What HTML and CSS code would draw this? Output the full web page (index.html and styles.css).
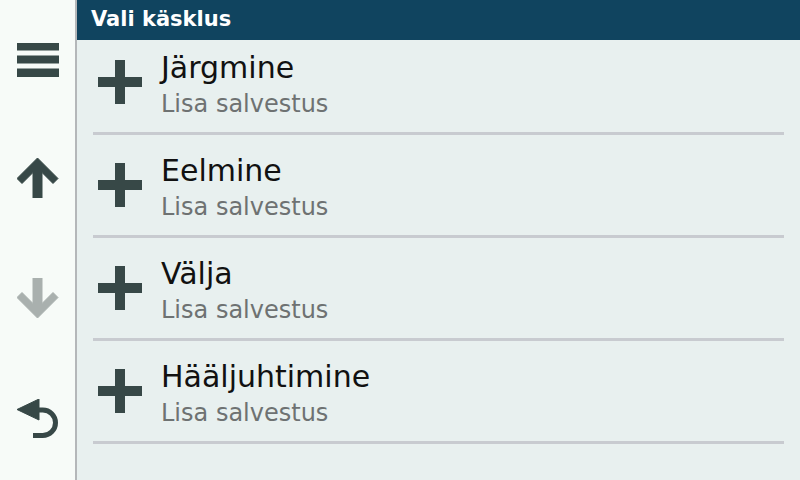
FILE: index.html
```html
<!DOCTYPE html>
<html lang="et">
  <head>
    <meta charset="UTF-8" />
    <meta name="viewport" content="width=device-width, initial-scale=1.0" />
    <title>Vali käsklus</title>
    <link rel="stylesheet" href="styles.css">
  </head>
  <body>
    <aside class="sidebar">
      <button class="side-btn" aria-label="Menüü">
        <svg width="42" height="34" viewBox="0 0 42 34">
          <rect x="0" y="0" width="42" height="7" />
          <rect x="0" y="13" width="42" height="7" />
          <rect x="0" y="26" width="42" height="8" />
        </svg>
      </button>
      <button class="side-btn" aria-label="Üles">
        <svg width="42" height="40" viewBox="0 0 42 40">
          <polygon points="20.5,0 41,20.5 36,25.5 25,14.5 25,40 16,40 16,14.5 5,25.5 0,20.5" />
        </svg>
      </button>
      <button class="side-btn disabled" aria-label="Alla">
        <svg width="42" height="40" viewBox="0 0 42 40">
          <polygon points="20.5,40 41,19.5 36,14.5 25,25.5 25,0 16,0 16,25.5 5,14.5 0,19.5" />
        </svg>
      </button>
      <button class="side-btn" aria-label="Tagasi">
        <svg width="42" height="40" viewBox="0 0 42 40">
          <polygon points="0,10.5 22,0 22,21" />
          <path d="M19 11 H25.75 A12.75 12.75 0 0 1 25.75 36.5 H16" fill="none" stroke-width="5" />
        </svg>
      </button>
    </aside>

    <main class="panel">
      <header class="title-bar">Vali käsklus</header>
      <ul class="list">
        <li class="item">
          <i class="plus"></i>
          <div class="label">
            <h3>Järgmine</h3>
            <p>Lisa salvestus</p>
          </div>
        </li>
        <li class="item">
          <i class="plus"></i>
          <div class="label">
            <h3>Eelmine</h3>
            <p>Lisa salvestus</p>
          </div>
        </li>
        <li class="item">
          <i class="plus"></i>
          <div class="label">
            <h3>Välja</h3>
            <p>Lisa salvestus</p>
          </div>
        </li>
        <li class="item">
          <i class="plus"></i>
          <div class="label">
            <h3>Hääljuhtimine</h3>
            <p>Lisa salvestus</p>
          </div>
        </li>
      </ul>
    </main>
  </body>
</html>
```

FILE: styles.css
```css
body {
  margin: 0;
  width: 800px;
  height: 480px;
  overflow: hidden;
  display: flex;
  font-family: "DejaVu Sans", "Noto Sans", sans-serif;
  background: #e8f0ef;
}
.sidebar {
  width: 77px;
  flex-shrink: 0;
  background: #f7fbf8;
  border-right: 2px solid #b4b7b9;
  display: flex;
  flex-direction: column;
  justify-content: space-between;
  padding: 43px 0 41px 17px;
  box-sizing: border-box;
}
.side-btn {
  background: none;
  border: 0;
  padding: 0;
  width: 42px;
  display: flex;
  fill: #374847;
  stroke: #374847;
  svg {
    display: block;
  }
  &.disabled {
    fill: #a9b0ae;
    stroke: #a9b0ae;
  }
}
.panel {
  flex-grow: 1;
  display: flex;
  flex-direction: column;
  overflow: hidden;
}
.title-bar {
  position: relative;
  z-index: 1;
  height: 40px;
  flex-shrink: 0;
  background: #10445f;
  color: #fff;
  font-weight: bold;
  font-size: 21px;
  line-height: 38px;
  padding-left: 14px;
}
.list {
  list-style: none;
  margin: -8px 0 0;
  padding: 0 16px;
}
.item {
  height: 100px;
  border-bottom: 3px solid #c8cbd0;
  display: flex;
  align-items: center;
  gap: 19px;
  padding-left: 5px;
}
.plus {
  width: 44px;
  height: 44px;
  flex-shrink: 0;
  background:
    linear-gradient(#374847, #374847) center / 10px 44px no-repeat,
    linear-gradient(#374847, #374847) center / 44px 10px no-repeat;
}
.label {
  padding-top: 6px;
  h3 {
    margin: 0;
    font-weight: 400;
    font-size: 30px;
    line-height: 34px;
    color: #111;
  }
  p {
    margin: 3px 0 0;
    font-size: 24px;
    line-height: 32px;
    color: #6e7272;
  }
}
```
